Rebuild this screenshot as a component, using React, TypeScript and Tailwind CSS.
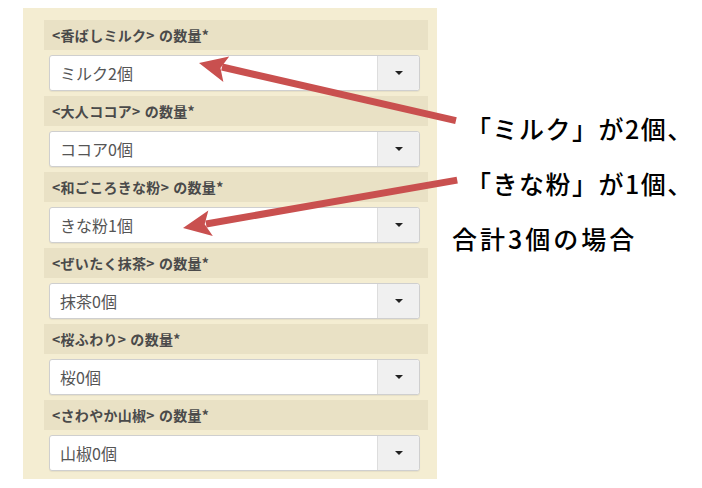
import React from "react";

const rows = [
  { label: "<香ばしミルク>", value: "ミルク2個" },
  { label: "<大人ココア>", value: "ココア0個" },
  { label: "<和ごころきな粉>", value: "きな粉1個" },
  { label: "<ぜいたく抹茶>", value: "抹茶0個" },
  { label: "<桜ふわり>", value: "桜0個" },
  { label: "<さわやか山椒>", value: "山椒0個" },
];

const jp = { fontFamily: '"Noto Sans CJK JP", "Noto Sans", sans-serif' };

export default function App() {
  return (
    <div className="relative w-[702px] h-[488px] bg-white overflow-hidden" style={jp}>
      <div className="absolute left-0 top-0 pl-[23px] pt-[8px]">
        <div className="w-[414px] h-[471px] bg-[#f4edd2] pl-[21px] pt-[12px] flex flex-col gap-[5px]">
          {rows.map((r) => (
            <React.Fragment key={r.label}>
              <div className="w-[384px] h-[30px] bg-[#e9e1c5] flex items-center pl-[8px] text-[14px] font-bold text-[#4a4a4a] tracking-[0.3px]">
                <span>{r.label}</span>
                <span className="ml-[4px]">の数量*</span>
              </div>
              <div className="ml-[5px] w-[371px] h-[36px] bg-white border border-[#cfcfcf] rounded-[3px] flex items-stretch shadow-[0_1px_1px_rgba(0,0,0,0.06)]">
                <div className="flex-1 flex items-center pl-[10px] text-[16px] text-[#555]">{r.value}</div>
                <div className="w-[42px] bg-[#f0f0f0] border-l border-[#ddd] rounded-r-[3px] flex items-center justify-center">
                  <div className="w-0 h-0 border-l-[4px] border-r-[4px] border-t-[4px] border-l-transparent border-r-transparent border-t-[#222]" />
                </div>
              </div>
            </React.Fragment>
          ))}
        </div>
      </div>

      <svg className="absolute left-0 top-0" width="702" height="488" viewBox="0 0 702 488">
        <g fill="#c9504f">
          <polygon points="0,-3.5 240,-3.5 240,3.5 0,3.5" transform="translate(222 67) rotate(12.9)" />
          <polygon points="0,0 28,-13 22,0 28,13" transform="translate(199 63) rotate(12.9)" />
          <polygon points="0,-3.5 255,-3.5 255,3.5 0,3.5" transform="translate(206 224) rotate(-9.9)" />
          <polygon points="0,0 28,-13 22,0 28,13" transform="translate(183 228) rotate(-9.9)" />
        </g>
      </svg>

      <div className="absolute left-[466px] top-[116px] text-[25px] font-medium text-black leading-none tracking-[1.5px]">「ミルク」が2個、</div>
      <div className="absolute left-[466px] top-[171px] text-[25px] font-medium text-black leading-none tracking-[1.5px]">「きな粉」が1個、</div>
      <div className="absolute left-[452px] top-[226px] text-[25px] font-medium text-black leading-none tracking-[3px]">合計3個の場合</div>
    </div>
  );
}
